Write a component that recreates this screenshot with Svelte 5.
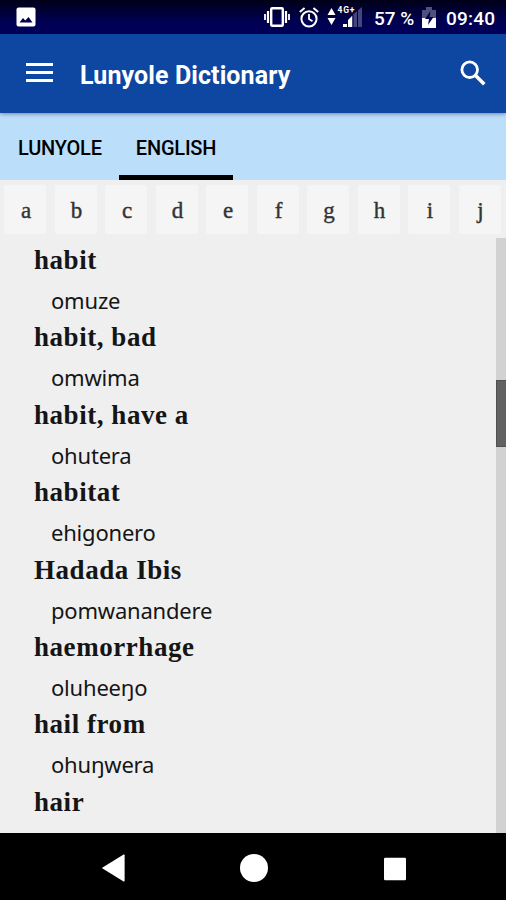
<script lang="ts">
	const tabs = ['LUNYOLE', 'ENGLISH'];
	const letters = ['a', 'b', 'c', 'd', 'e', 'f', 'g', 'h', 'i', 'j'];

	const entries: Array<{ word: string; meaning?: string }> = [
		{ word: 'habit', meaning: 'omuze' },
		{ word: 'habit, bad', meaning: 'omwima' },
		{ word: 'habit, have a', meaning: 'ohutera' },
		{ word: 'habitat', meaning: 'ehigonero' },
		{ word: 'Hadada Ibis', meaning: 'pomwanandere' },
		{ word: 'haemorrhage', meaning: 'oluheeŋo' },
		{ word: 'hail from', meaning: 'ohuŋwera' },
		{ word: 'hair' }
	];

	let activeTab = $state('ENGLISH');
</script>

<div class="screen">
	<div class="status-bar">
		<svg class="picture" width="20" height="20" viewBox="0 0 20 20">
			<rect x="0.5" y="0.5" width="19" height="19" rx="2" fill="#fff" />
			<path d="M3.5 15.5 7 11l2.3 2.6L12.5 10l4 5.5z" fill="#00004a" />
		</svg>
		<svg class="vibrate" width="26" height="20" viewBox="0 0 26 20">
			<rect x="7.2" y="1.2" width="11.6" height="17.6" rx="1" fill="none" stroke="#fff" stroke-width="2.4" />
			<path d="M4 4v12M22 4v12" stroke="#fff" stroke-width="2.2" />
			<path d="M1 7v6M25 7v6" stroke="#fff" stroke-width="1.8" />
		</svg>
		<svg class="alarm" width="20" height="21" viewBox="0 0 20 21">
			<circle cx="10" cy="11.8" r="7.6" fill="none" stroke="#fff" stroke-width="2" />
			<path d="M10 7v5l3.5 2.2" fill="none" stroke="#fff" stroke-width="1.8" />
			<path d="M0.8 5 5.6 1M19.2 5 14.4 1" stroke="#fff" stroke-width="2" />
		</svg>
		<svg class="signal" width="36" height="24" viewBox="0 0 36 24">
			<path d="M4.5 3 8.5 10h-8zM4.5 20 8.5 13h-8z" fill="#fff" />
			<path d="M26 9.5 35 2v20h-9z" fill="#45457e" />
			<path d="M16 19h4v3h-4zM20.5 15.5l5-5V22h-5z" fill="#fff" />
			<path d="M20.5 14v8M26 10v12M30.5 5v17" stroke="#00004a" />
			<text x="10.5" y="7.5" textLength="17">4G+</text>
		</svg>
		<span class="percent">57 %</span>
		<svg class="battery" width="14" height="21" viewBox="0 0 14 21">
			<path d="M0 3h4V0h6v3h4v9H0z" fill="#50507e" />
			<path d="M0 11h14v10H0z" fill="#fff" />
			<path d="M8.5 4 3 12h4l-1 6 5.5-8H7.5z" fill="#00004a" />
		</svg>
		<span class="clock">09:40</span>
	</div>

	<header class="app-bar">
		<svg class="menu" width="27" height="21" viewBox="0 0 27 21">
			<path d="M0 2.5h27M0 10.5h27M0 18.5h27" stroke="#fff" stroke-width="3" />
		</svg>
		<h1>Lunyole Dictionary</h1>
		<svg class="search" width="26" height="26" viewBox="0 0 26 26" fill="none" stroke="#fff">
			<circle cx="9.7" cy="9.7" r="7.8" stroke-width="2.8" />
			<path d="m15.3 15.3 9 9" stroke-width="3.5" />
		</svg>
	</header>

	<nav class="tabs">
		{#each tabs as tab}
			<button class:active={tab === activeTab} onclick={() => (activeTab = tab)}>{tab}</button>
		{/each}
	</nav>

	<div class="letters">
		{#each letters as letter}
			<span class="letter">{letter}</span>
		{/each}
	</div>

	<main>
		<div class="entries">
			{#each entries as entry}
				<div class="entry">
					<div class="word">{entry.word}</div>
					{#if entry.meaning}
						<div class="meaning">{entry.meaning}</div>
					{/if}
				</div>
			{/each}
		</div>
		<div class="track"><div class="thumb"></div></div>
	</main>

	<footer>
		<svg width="24" height="28" viewBox="0 0 24 28">
			<path d="M.8 14 22.6.6q1-.4 1 .6v25.6q0 1-1 .6z" fill="#fff" />
		</svg>
		<svg width="28" height="28" viewBox="0 0 28 28">
			<circle cx="14" cy="14" r="14" fill="#fff" />
		</svg>
		<svg width="24" height="28" viewBox="0 0 24 28">
			<rect x="1" y="3.8" width="22" height="22.4" rx="1.2" fill="#fff" />
		</svg>
	</footer>
</div>

<style>
	:global(body) {
		margin: 0;
	}

	.screen {
		display: flex;
		flex-direction: column;
		width: 506px;
		height: 900px;
		overflow: hidden;
		background: #efefef;
		font-family: Roboto, sans-serif;
	}

	svg {
		display: block;
		flex: none;
	}

	/* status bar */
	.status-bar {
		display: flex;
		align-items: center;
		flex: none;
		height: 34px;
		box-sizing: border-box;
		padding: 0 0 0 16px;
		background: linear-gradient(#000018, #000050 60%, #00005c);
		color: #fff;
		font-size: 19px;
		font-weight: 500;
		white-space: nowrap;
	}

	.vibrate {
		margin-left: 228px;
	}

	.alarm {
		margin-left: 9px;
	}

	.signal {
		margin-left: 8px;
	}

	.signal text {
		fill: #fff;
		font: bold 8.5px Roboto, sans-serif;
	}

	.percent {
		width: 42px;
		margin-left: 11px;
		margin-top: 2px;
	}

	.battery {
		margin-left: 6px;
	}

	.clock {
		margin-left: 10px;
		margin-top: 2px;
		letter-spacing: 0.2px;
	}

	/* app bar */
	.app-bar {
		display: flex;
		align-items: center;
		flex: none;
		height: 79px;
		box-sizing: border-box;
		padding: 0 20px 2px 26px;
		background: #0d47a1;
		color: #fff;
		position: relative;
		box-shadow: 0 1px 4px rgba(0, 0, 0, 0.4);
	}

	h1 {
		flex: 1;
		margin: 6px 0 0 27px;
		font-size: 25px;
		font-weight: 700;
		line-height: 30px;
		letter-spacing: 0.1px;
	}

	/* language tabs */
	.tabs {
		display: flex;
		flex: none;
		height: 67px;
		background: #bbdefb;
	}

	.tabs button {
		box-sizing: border-box;
		padding: 8px 17px 0;
		border: 0;
		border-bottom: 5px solid transparent;
		background: none;
		color: #000;
		font: 500 20px Roboto, sans-serif;
		letter-spacing: -0.2px;
	}

	.tabs button:first-child {
		padding-left: 18px;
	}

	.tabs button.active {
		border-bottom-color: #000;
	}

	/* alphabet strip */
	.letters {
		display: flex;
		gap: 8.5px;
		flex: none;
		height: 58px;
		box-sizing: border-box;
		padding: 5px 4px 4px;
		overflow: hidden;
	}

	.letter {
		flex: none;
		width: 42px;
		box-sizing: border-box;
		padding-left: 2px;
		border-radius: 2px;
		background: #f5f5f5;
		color: #333;
		font: 23px/51px 'Liberation Serif', serif;
		text-align: center;
		-webkit-text-stroke: 0.4px #333;
	}

	/* word list */
	main {
		display: flex;
		flex: 1;
		min-height: 0;
	}

	.entries {
		flex: 1;
		padding: 4px 0 0 34px;
		color: #151515;
	}

	.entry {
		height: 77.4px;
	}

	.word {
		height: 39px;
		font: bold 27px/37px 'Liberation Serif', serif;
		letter-spacing: 0.55px;
	}

	.meaning {
		padding-left: 17px;
		font: 22px/38px 'Noto Sans', sans-serif;
		letter-spacing: -0.2px;
	}

	.track {
		width: 10px;
		background: #d2d2d2;
	}

	.thumb {
		height: 67px;
		margin-top: 142px;
		box-sizing: border-box;
		border: 1px solid #505050;
		border-right: 0;
		background: #626262;
	}

	.track::before {
		content: '';
		display: table;
	}

	/* navigation bar */
	footer {
		display: flex;
		align-items: center;
		justify-content: space-between;
		flex: none;
		height: 67px;
		box-sizing: border-box;
		padding: 3px 99px 0 101px;
		background: #000;
	}
</style>
